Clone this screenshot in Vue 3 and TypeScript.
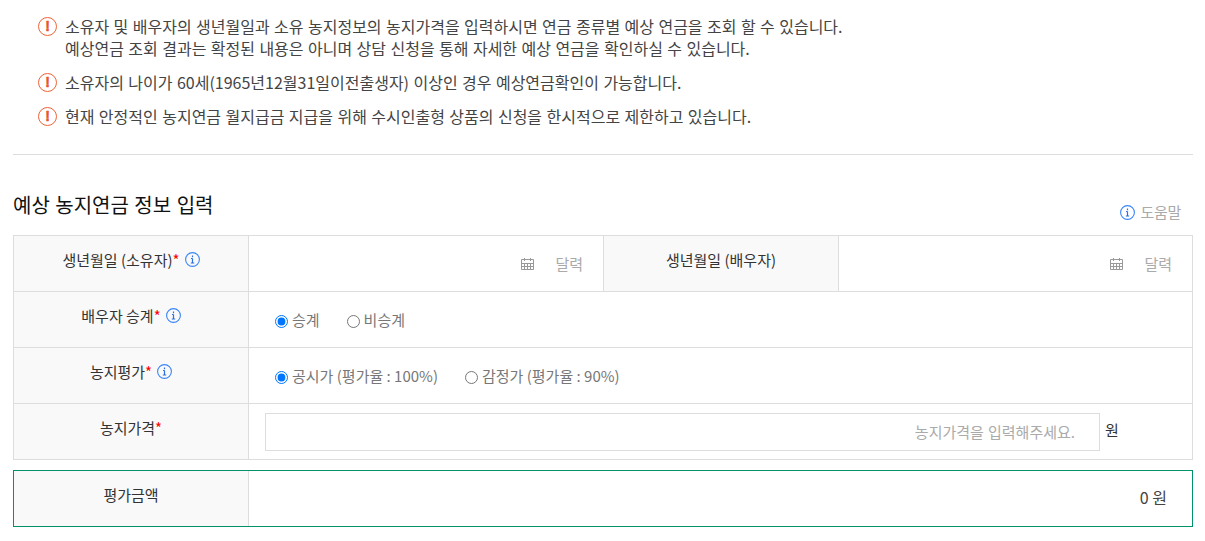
<script setup lang="ts">
const notices: string[][] = [
  ['소유자 및 배우자의 생년월일과 소유 농지정보의 농지가격을 입력하시면 연금 종류별 예상 연금을 조회 할 수 있습니다.', '예상연금 조회 결과는 확정된 내용은 아니며 상담 신청을 통해 자세한 예상 연금을 확인하실 수 있습니다.'],
  ['소유자의 나이가 60세(1965년12월31일이전출생자) 이상인 경우 예상연금확인이 가능합니다.'],
  ['현재 안정적인 농지연금 월지급금 지급을 위해 수시인출형 상품의 신청을 한시적으로 제한하고 있습니다.'],
]
</script>

<template>
  <div class="page">
    <ul class="notices">
      <li v-for="(n, i) in notices" :key="i" class="notice">
        <span class="warn">!</span>
        <div>
          <p v-for="line in n" :key="line">{{ line }}</p>
        </div>
      </li>
    </ul>
    <hr class="rule" />
    <div class="head">
      <h2>예상 농지연금 정보 입력</h2>
      <span class="help">
        <svg class="info" viewBox="0 0 15 15"><circle cx="7.5" cy="7.5" r="6.9" /><path d="M7.5 3.6v1.6M7.5 6.4v4.6M6 6.5h1.5M5.8 11h3.4" /></svg>
        도움말
      </span>
    </div>
    <div class="table">
      <div class="row">
        <div class="th">
          <span>생년월일 (소유자)<em>*</em></span>
          <svg class="info" viewBox="0 0 15 15"><circle cx="7.5" cy="7.5" r="6.9" /><path d="M7.5 3.6v1.6M7.5 6.4v4.6M6 6.5h1.5M5.8 11h3.4" /></svg>
        </div>
        <div class="td date">
          <svg class="cal" viewBox="0 0 13 12"><path d="M.5 1.5h12v10H.5zM3.5 0v3M9.5 0v3M.5 5.5h12M.5 8.5h12M3.5 5.5v6M6.5 5.5v6M9.5 5.5v6" /></svg>
          <span>달력</span>
        </div>
        <div class="th th2"><span>생년월일 (배우자)</span></div>
        <div class="td date date2">
          <svg class="cal" viewBox="0 0 13 12"><path d="M.5 1.5h12v10H.5zM3.5 0v3M9.5 0v3M.5 5.5h12M.5 8.5h12M3.5 5.5v6M6.5 5.5v6M9.5 5.5v6" /></svg>
          <span>달력</span>
        </div>
      </div>
      <div class="row">
        <div class="th">
          <span>배우자 승계<em>*</em></span>
          <svg class="info" viewBox="0 0 15 15"><circle cx="7.5" cy="7.5" r="6.9" /><path d="M7.5 3.6v1.6M7.5 6.4v4.6M6 6.5h1.5M5.8 11h3.4" /></svg>
        </div>
        <div class="td radios">
          <label><input type="radio" name="succ" checked />승계</label>
          <label><input type="radio" name="succ" />비승계</label>
        </div>
      </div>
      <div class="row">
        <div class="th">
          <span>농지평가<em>*</em></span>
          <svg class="info" viewBox="0 0 15 15"><circle cx="7.5" cy="7.5" r="6.9" /><path d="M7.5 3.6v1.6M7.5 6.4v4.6M6 6.5h1.5M5.8 11h3.4" /></svg>
        </div>
        <div class="td radios">
          <label><input type="radio" name="eval" checked />공시가 (평가율 : 100%)</label>
          <label><input type="radio" name="eval" />감정가 (평가율 : 90%)</label>
        </div>
      </div>
      <div class="row">
        <div class="th"><span>농지가격<em>*</em></span></div>
        <div class="td price">
          <input type="text" placeholder="농지가격을 입력해주세요." />
          <span>원</span>
        </div>
      </div>
    </div>
    <div class="result">
      <div class="th"><span>평가금액</span></div>
      <div class="td total">0 원</div>
    </div>
  </div>
</template>

<style>
body { margin: 0; background: #fff; }
</style>

<style scoped>
.page {
  width: 1180px;
  margin-left: 13px;
  font-family: "Noto Sans CJK KR", "Noto Sans", sans-serif;
  font-size: 15px;
  color: #444;
}
.notices { list-style: none; margin: 0; padding: 15px 0 0 25px; }
.notice { display: flex; gap: 8px; margin-bottom: 12px; line-height: 22px; font-size: 16px; word-spacing: 0.85px; }
.notice p { margin: 0; }
.warn {
  box-sizing: border-box;
  width: 19px; height: 19px; margin-top: 2px; flex: none;
  border: 1px solid #ee6238; border-radius: 50%;
  color: #e8562a; font-family: "Liberation Sans", sans-serif; font-size: 14px; font-weight: 700; line-height: 17px; text-align: center;
  -webkit-text-stroke: 0.5px #e8562a;
}
.rule { border: 0; border-top: 1px solid #ddd; margin: 27px 0 0; }
.head { display: flex; justify-content: space-between; height: 80px; align-items: flex-start; }
.head h2 { margin: 36px 0 0; font-size: 20px; font-weight: 400; line-height: 28px; color: #111; word-spacing: 1px; }
.help { display: flex; align-items: center; gap: 5px; margin: 46px 12px 0 0; color: #aaa; font-size: 15px; line-height: 22px; letter-spacing: -0.3px; }
.info { width: 15px; height: 15px; flex: none; }
.info circle { fill: none; stroke: #3a85f7; stroke-width: 1.1; }
.info path { fill: none; stroke: #2a6fe0; stroke-width: 1.2; }
.table { border: 1px solid #ddd; border-bottom: 0; box-sizing: border-box; }
.row { display: flex; height: 56px; box-sizing: border-box; border-bottom: 1px solid #ddd; }
.th {
  box-sizing: border-box;
  width: 235px; flex: none;
  display: flex; justify-content: center; gap: 5px;
  padding-top: 13px;
  background: #f9f9f9;
  border-right: 1px solid #ddd;
  color: #333; font-size: 15px; line-height: 22px;
}
.th .info { margin-top: 3px; }
.th em { color: #f00; font-style: normal; }
.th2 { border-left: 1px solid #ddd; width: 236px; }
.td { flex: 1; min-width: 0; box-sizing: border-box; }
.date { width: 354px; flex: none; display: flex; align-items: center; justify-content: flex-end; gap: 21px; padding: 0 20px 0 0; color: #aaa; }
.date2 { flex: 1; width: auto; }
.cal { width: 13px; height: 12px; }
.cal path { fill: none; stroke: #999; stroke-width: 1; }
.radios { display: flex; align-items: center; gap: 27px; padding-left: 26px; color: #777; }
.radios label { display: flex; align-items: center; }
.radios input { margin: 3px 4px 0 0; width: 13px; height: 13px; }
.price { display: flex; align-items: flex-start; gap: 5px; padding: 9px 0 0 16px; color: #333; line-height: 34px; }
.price span { line-height: 34px; }
.price input {
  box-sizing: border-box; width: 835px; height: 38px;
  border: 1px solid #ddd; outline: 0; padding: 0 24px 2px;
  font: inherit; text-align: right; word-spacing: 0.8px;
}
.price input::placeholder { color: #aaa; opacity: 1; }
.result { display: flex; height: 57px; margin-top: 10px; box-sizing: border-box; border: 1px solid #00926b; }
.result .th { padding-top: 13px; }
.total { text-align: right; padding: 14px 25px 0 0; line-height: 24px; color: #444; font-size: 16px; }
</style>
